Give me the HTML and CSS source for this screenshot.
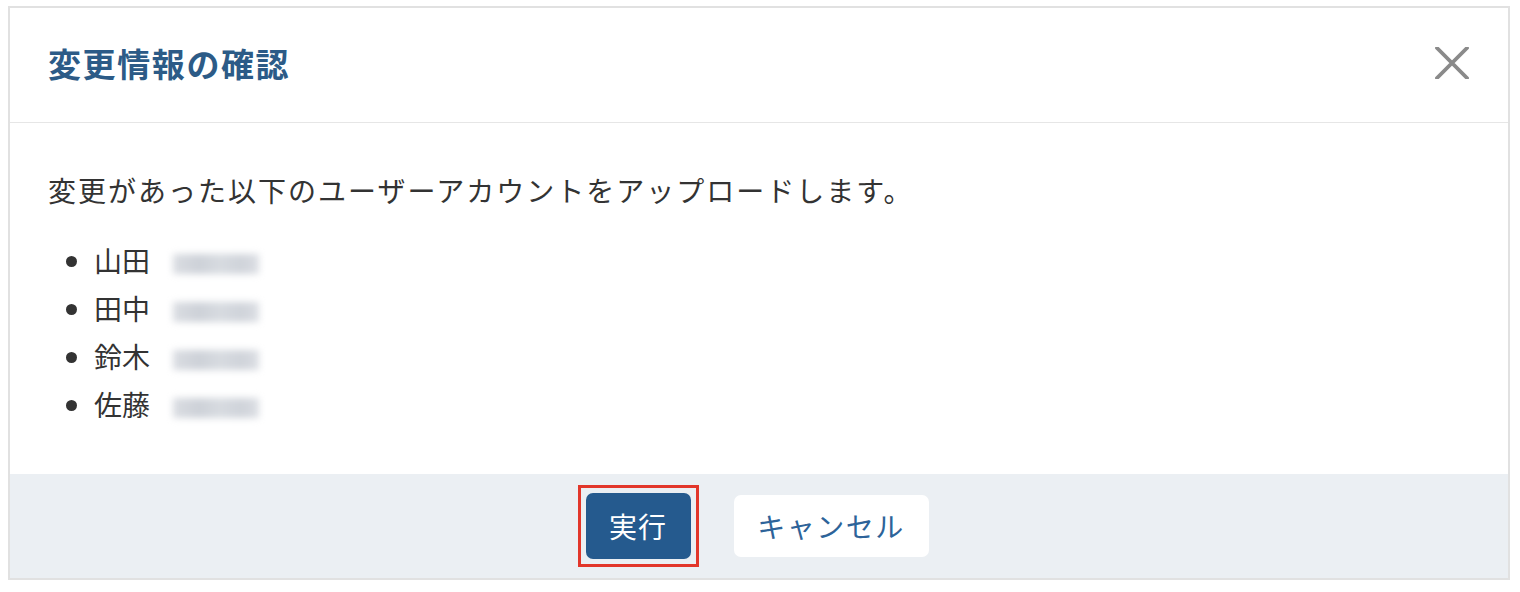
FILE: index.html
```html
<!DOCTYPE html>
<html lang="ja">
<head>
<meta charset="utf-8">
<link rel="stylesheet" href="styles.css">
</head>
<body>
<div class="modal">
  <div class="modal-header">
    <h1 class="modal-title">変更情報の確認</h1>
    <button class="close-btn" aria-label="閉じる">
      <svg width="34" height="32" viewBox="0 0 34 32"><path d="M2 1 L32 31 M32 1 L2 31" stroke="#8a8a8a" stroke-width="3.8" stroke-linecap="round" fill="none"/></svg>
    </button>
  </div>
  <div class="modal-body">
    <p class="lead">変更があった以下のユーザーアカウントをアップロードします。</p>
    <ul class="user-list">
      <li><span class="name">山田</span><span class="masked"></span></li>
      <li><span class="name">田中</span><span class="masked"></span></li>
      <li><span class="name">鈴木</span><span class="masked"></span></li>
      <li><span class="name">佐藤</span><span class="masked"></span></li>
    </ul>
  </div>
  <div class="modal-footer">
    <span class="highlight"><button class="btn btn-primary">実行</button></span>
    <button class="btn btn-cancel">キャンセル</button>
  </div>
</div>
</body>
</html>
```

FILE: styles.css
```css
* { box-sizing: border-box; }
html, body { margin: 0; padding: 0; background: #ffffff; }
body {
  font-family: "Noto Sans CJK JP", "Noto Sans", sans-serif;
  color: #333333;
  padding: 6px 0 0 8px;
}
.modal {
  width: 1502px;
  height: 574px;
  border: 2px solid #e1e1e1;
  display: flex;
  flex-direction: column;
  background: #fff;
}
.modal-header {
  height: 115px;
  border-bottom: 1px solid #e6e6e6;
  display: flex;
  align-items: center;
  justify-content: space-between;
  padding: 0 38px 4px 38px;
  flex: none;
}
.modal-title {
  margin: 0;
  font-size: 33px;
  font-weight: 700;
  color: #2c5b87;
  letter-spacing: 1.6px;
}
.close-btn {
  border: none;
  background: none;
  padding: 0;
  width: 34px;
  height: 32px;
  display: flex;
  align-items: center;
  justify-content: center;
  margin-right: 1px;
}
.modal-body {
  flex: 1;
  padding: 43px 38px 0 38px;
}
.lead {
  margin: 0 0 22px 0;
  font-size: 28px;
  line-height: 48px;
  letter-spacing: 2px;
}
.user-list {
  margin: 0;
  padding-left: 46px;
  font-size: 28px;
  line-height: 48px;
}
.name { display: inline-block; width: 79px; }
.masked {
  display: inline-block;
  width: 86px;
  height: 20px;
  vertical-align: middle;
  background: linear-gradient(90deg, #dadde2 0%, #cdd1d8 30%, #d7dbe0 55%, #cfd3da 80%, #dcdfe4 100%);
  filter: blur(3.5px);
}
.modal-footer {
  height: 104px;
  flex: none;
  background: #ebeff3;
  display: flex;
  align-items: center;
  justify-content: center;
  gap: 35px;
  padding-right: 12px;
}
.highlight {
  display: flex;
  border: 3px solid #e2362a;
  padding: 5px;
}
.btn {
  font-family: "Noto Sans CJK JP", "Noto Sans", sans-serif;
  font-size: 28px;
  height: 64px;
  border: none;
  border-radius: 7px;
  cursor: pointer;
  white-space: nowrap;
  padding: 0;
}
.btn-primary {
  background: #255a8e;
  color: #ffffff;
  width: 105px;
  height: 66px;
  letter-spacing: 1px;
}
.btn-cancel {
  background: #ffffff;
  color: #2d6399;
  width: 195px;
  height: 62px;
  letter-spacing: 1.5px;
}
```
